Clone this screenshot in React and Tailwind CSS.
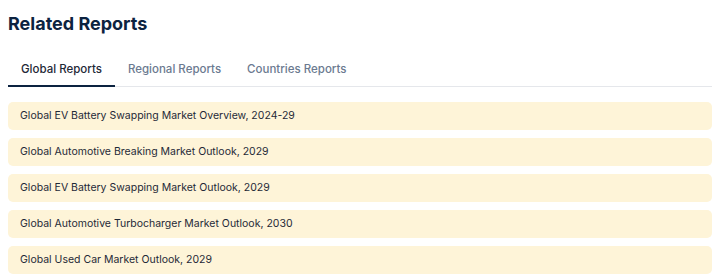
import React, { useState } from 'react';

const tabs = ['Global Reports', 'Regional Reports', 'Countries Reports'];

const reports = [
  'Global EV Battery Swapping Market Overview, 2024-29',
  'Global Automotive Breaking Market Outlook, 2029',
  'Global EV Battery Swapping Market Outlook, 2029',
  'Global Automotive Turbocharger Market Outlook, 2030',
  'Global Used Car Market Outlook, 2029',
];

export default function App() {
  const [active, setActive] = useState(0);

  return (
    <div className="w-[718px] h-[277px] bg-white px-2 pt-[12px] font-['Inter',sans-serif] overflow-hidden">
      <h2 className="text-[18px] leading-[24px] font-bold text-[#0c2340]">Related Reports</h2>

      <div className="mt-[25px] flex border-b border-[#e5e7eb] w-[704px]">
        {tabs.map((t, i) => (
          <button
            key={t}
            onClick={() => setActive(i)}
            className={
              i === active
                ? 'px-[13px] pb-[8px] text-[11.5px] leading-[16px] font-medium text-[#1f2937] border-b-2 border-[#0c2340] -mb-px'
                : 'px-[13px] pb-[8px] text-[11.5px] leading-[16px] font-medium text-[#6b7a90] border-b-2 border-transparent -mb-px'
            }
          >
            {t}
          </button>
        ))}
      </div>

      <div className="mt-[15px] flex flex-col gap-2 w-[704px]">
        {reports.map((r) => (
          <div
            key={r}
            className="h-[28px] flex items-center px-3 rounded-[5px] bg-[#fef4d8] text-[10.5px] text-[#1f2937]"
          >
            {r}
          </div>
        ))}
      </div>
    </div>
  );
}
